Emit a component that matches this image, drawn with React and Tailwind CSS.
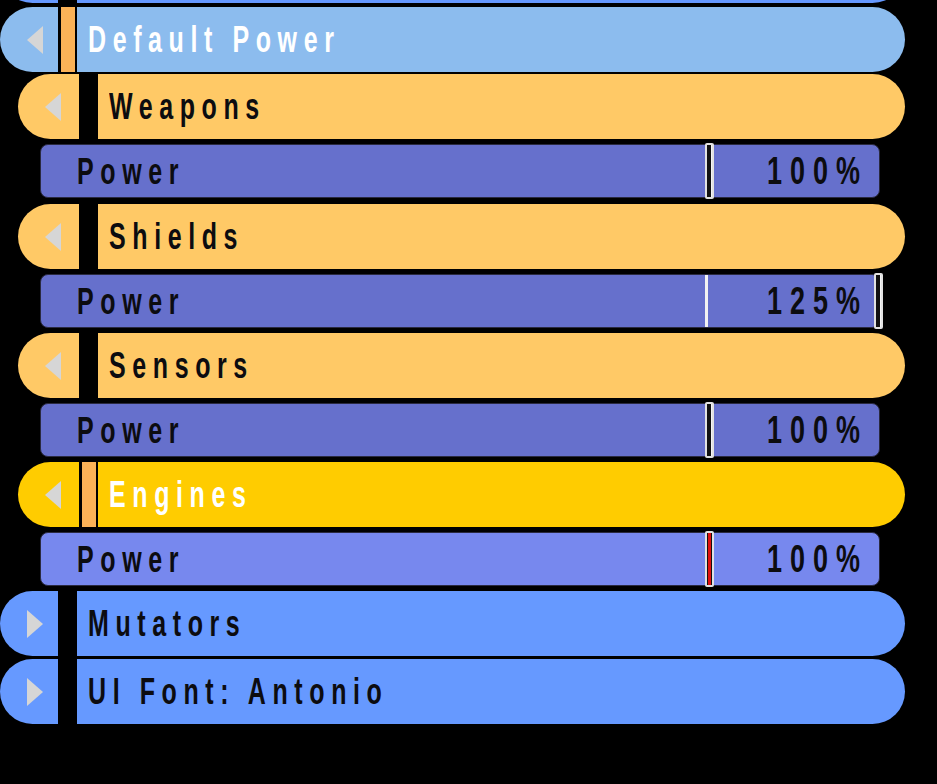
import React from "react";

const font = "font-['Liberation_Sans',Arial,sans-serif] font-bold";

function Tri({ dir }) {
  // small light-grey triangle in the row cap
  return (
    <svg width="16" height="28" viewBox="0 0 16 28" className="block">
      {dir === "left" ? (
        <polygon points="16,0 16,28 0,14" fill="#d6d6d6" />
      ) : (
        <polygon points="0,0 0,28 16,14" fill="#d6d6d6" />
      )}
    </svg>
  );
}

function Label({ children, white, wide }) {
  return (
    <span
      className={`inline-block [transform:scaleY(1.45)] leading-none ${font} ${
        wide ? "text-[27px] tracking-[8px]" : "text-[25px] tracking-[6.6px]"
      } ${white ? "text-white" : "text-[#0c0c10]"}`}
    >
      {children}
    </span>
  );
}

function Header({ label, color, level, open, selected, white, cls = "" }) {
  return (
    <div
      className={`flex h-[65px] shrink-0 mr-[32px] ${level ? "ml-[18px]" : ""} ${cls}`}
    >
      <div
        className={`${level ? "w-[61px]" : "w-[58px]"} rounded-l-full flex items-center pl-[27px] ${color}`}
      >
        <Tri dir={open ? "left" : "right"} />
      </div>
      <div className="w-[19px] bg-black pl-[3px] pr-[2px]">
        {selected && <div className="h-full bg-[#fbb257]" />}
      </div>
      <div className={`flex-1 rounded-r-full flex items-center pl-[11px] ${color}`}>
        <Label white={white}>{label}</Label>
      </div>
    </div>
  );
}

function Thumb({ left, focused }) {
  return (
    <div
      className="absolute top-[-2px] bottom-[-2px] w-[9px] rounded-[2px] border-2 border-[#e2e2e2] bg-[#111] flex justify-end"
      style={{ left }}
    >
      <div className={`h-full ${focused ? "w-[3px] bg-[#e01010] mx-auto" : "w-[1px] bg-[#f4f4f4]"}`} />
    </div>
  );
}

function PowerRow({ value, color = "bg-[#6670cc]", focused }) {
  const over = value > 100;
  return (
    <div
      className={`relative flex items-center h-[54px] shrink-0 ml-[40px] mr-[57px] rounded-[8px] border border-[#2a2a40] pl-[36px] pr-[11px] ${color}`}
    >
      <Label>Power</Label>
      <div className="flex-1" />
      <Label wide>{value}%</Label>
      {over && <div className="absolute top-0 bottom-0 left-[664px] w-[3px] bg-[#f2f2f2]" />}
      <Thumb left={over ? 833 : 664} focused={focused} />
    </div>
  );
}

export default function App() {
  return (
    <div className="w-[937px] h-[784px] bg-black overflow-hidden flex flex-col">
      <Header label="" color="bg-[#6699ff]" level={0} cls="mt-[-62px]" />
      <Header
        label="Default Power"
        color="bg-[#8cbcee]"
        level={0}
        open
        selected
        white
        cls="mt-[4px]"
      />
      <Header label="Weapons" color="bg-[#ffc966]" level={1} open cls="mt-[2px]" />
      <div className="mt-[5px]">
        <PowerRow value={100} />
      </div>
      <Header label="Shields" color="bg-[#ffc966]" level={1} open cls="mt-[6px]" />
      <div className="mt-[5px]">
        <PowerRow value={125} />
      </div>
      <Header label="Sensors" color="bg-[#ffc966]" level={1} open cls="mt-[5px]" />
      <div className="mt-[5px]">
        <PowerRow value={100} />
      </div>
      <Header
        label="Engines"
        color="bg-[#ffcc00]"
        level={1}
        open
        selected
        white
        cls="mt-[5px]"
      />
      <div className="mt-[5px]">
        <PowerRow value={100} color="bg-[#7788ee]" focused />
      </div>
      <Header label="Mutators" color="bg-[#6699ff]" level={0} cls="mt-[5px]" />
      <Header label="UI Font: Antonio" color="bg-[#6699ff]" level={0} cls="mt-[3px]" />
    </div>
  );
}
